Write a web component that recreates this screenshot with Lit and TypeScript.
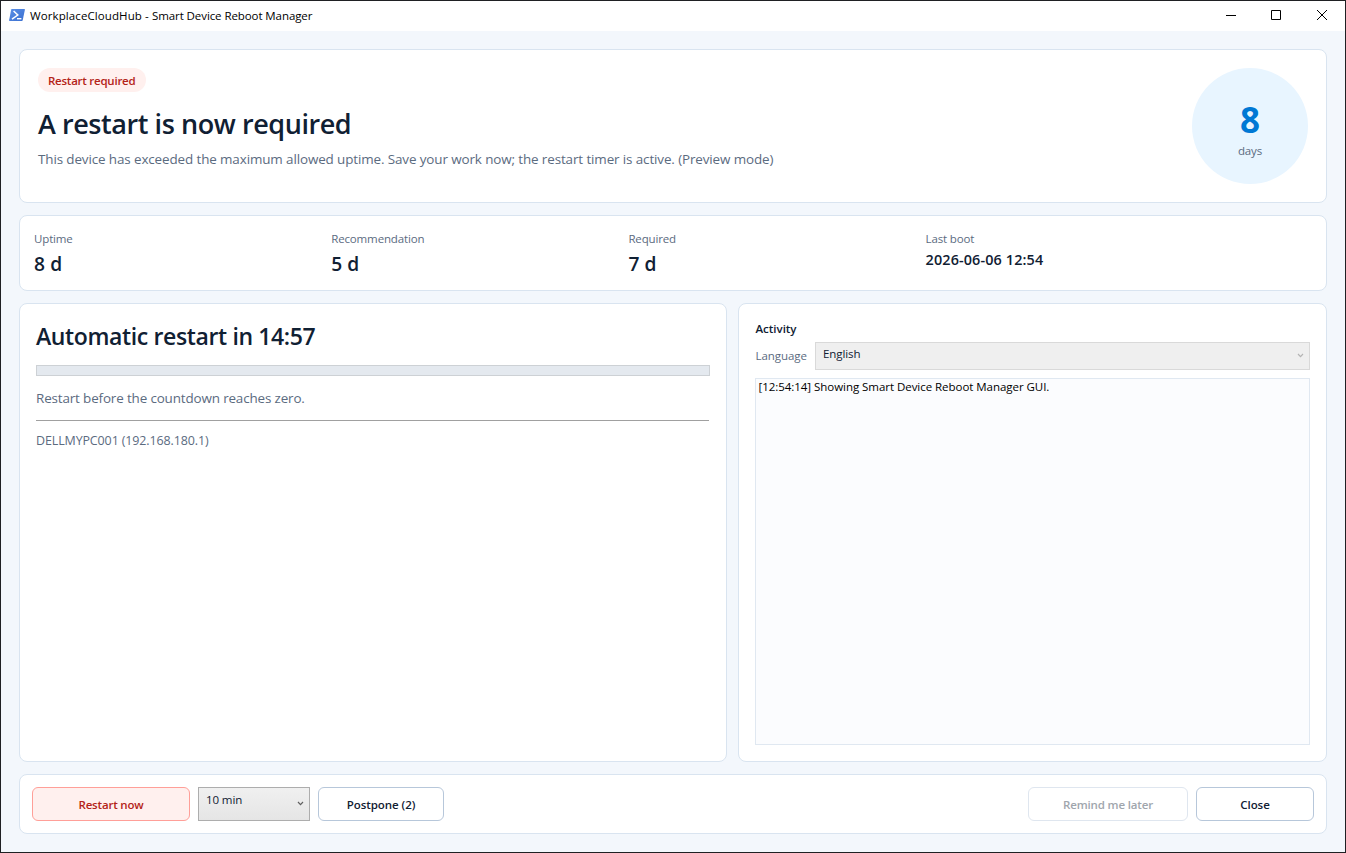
import { LitElement, html, css } from "lit";
import { customElement } from "lit/decorators.js";

interface Stat {
  label: string;
  value: string;
  small?: boolean;
}

const STATS: Stat[] = [
  { label: "Uptime", value: "8 d" },
  { label: "Recommendation", value: "5 d" },
  { label: "Required", value: "7 d" },
  { label: "Last boot", value: "2026-06-06 12:54", small: true },
];

@customElement("app-root")
export class AppRoot extends LitElement {
  static styles = css`
    * {
      box-sizing: border-box;
    }
    :host {
      display: block;
      font-family: "Segoe UI", "Open Sans", "Noto Sans", sans-serif;
      font-size: 11.52px;
      line-height: 16px;
      color: #102033;
    }
    .window {
      display: flex;
      flex-direction: column;
      height: 853px;
      border: 1px solid #1f2023;
      background: #f3f7fc;
      overflow: hidden;
      white-space: nowrap;
    }
    .titlebar {
      display: flex;
      align-items: center;
      height: 30px;
      flex: none;
      background: #fff;
      padding-left: 8px;
      color: #000;
    }
    .app-icon {
      display: block;
      width: 16px;
      height: 12px;
      margin-right: 5px;
      margin-top: -2px;
    }
    .title {
      flex: 1;
      letter-spacing: -0.09px;
    }
    .product {
      letter-spacing: 0.09px;
    }
    .window-controls {
      display: block;
      width: 138px;
      height: 30px;
    }
    .content {
      flex: 1;
      display: flex;
      flex-direction: column;
      gap: 12px;
      padding: 18px;
    }
    .card {
      background: #fff;
      border: 1px solid #d9e4f0;
      border-radius: 8px;
    }
    .header {
      display: flex;
      justify-content: space-between;
      height: 154px;
      padding: 18px;
    }
    .badge {
      width: 108px;
      height: 24px;
      border-radius: 12px;
      background: #fff0ee;
      color: #b42318;
      font-weight: 600;
      line-height: 24px;
      padding: 1px 0 0 10px;
      letter-spacing: -0.25px;
    }
    h1,
    h2,
    p {
      margin: 0;
    }
    h1 {
      margin-top: 13px;
      font-size: 27px;
      line-height: 38px;
      font-weight: 600;
      letter-spacing: -0.43px;
    }
    .description {
      margin-top: 6px;
      font-size: 13.44px;
      line-height: 20px;
      letter-spacing: -0.12px;
      color: #5b6b7f;
    }
    .circle {
      width: 116px;
      height: 116px;
      border-radius: 50%;
      background: #e8f5ff;
      display: flex;
      flex-direction: column;
      align-items: center;
      justify-content: center;
      padding-top: 6px;
    }
    .count {
      font-size: 35px;
      line-height: 40px;
      font-weight: 700;
      color: #0078d4;
    }
    .unit {
      margin-top: 3px;
      letter-spacing: -0.17px;
      color: #5b6b7f;
    }
    .stats {
      display: grid;
      grid-template-columns: repeat(4, 297.2px);
      height: 76px;
      padding: 15px 14px 0;
    }
    .label {
      letter-spacing: -0.15px;
      color: #5b6b7f;
    }
    .value {
      margin-top: 4px;
      font-size: 19.2px;
      line-height: 26px;
      font-weight: 600;
      letter-spacing: 0.1px;
    }
    .value.small {
      margin-top: 3px;
      font-size: 14.4px;
      line-height: 20px;
      letter-spacing: 0.13px;
    }
    .main {
      display: grid;
      grid-template-columns: 708px 589px;
      gap: 11px;
      height: 459px;
    }
    .panel {
      padding: 16px;
      display: flex;
      flex-direction: column;
    }
    h2 {
      font-size: 23.04px;
      line-height: 32px;
      font-weight: 600;
      letter-spacing: -0.38px;
    }
    .progress {
      margin-top: 13px;
      height: 11px;
      border: 1px solid #cdd1d5;
      background: #e4e9ef;
    }
    .hint {
      margin-top: 12px;
      font-size: 13.44px;
      line-height: 20px;
      letter-spacing: -0.15px;
      color: #5b6b7f;
    }
    .separator {
      margin: 12px 1px 0 0;
      height: 1px;
      background: #a0a0a0;
    }
    .host {
      margin-top: 11px;
      font-size: 12.48px;
      line-height: 18px;
      letter-spacing: -0.116px;
      color: #5b6b7f;
    }
    .activity {
      padding: 1px 0 0 0.5px;
      height: 16px;
      font-weight: 600;
      letter-spacing: -0.02px;
    }
    .language {
      display: flex;
      align-items: center;
      justify-content: space-between;
      height: 28px;
      margin-top: 6px;
      padding-left: 0.5px;
      color: #5b6b7f;
      letter-spacing: -0.08px;
    }
    .combo {
      display: flex;
      justify-content: space-between;
      border: 1px solid #adadad;
      color: #102033;
      letter-spacing: -0.1px;
    }
    .combo.disabled {
      width: 495px;
      height: 28px;
      padding: 3px 5px 0 7px;
      background: #efefef;
      border-color: #d9d9d9;
    }
    .combo.delay {
      width: 112px;
      height: 34px;
      margin: 0 8px;
      padding: 4px 5px 0 7px;
      background: linear-gradient(#f0f0f0, #e5e5e5);
    }
    .chevron {
      display: block;
      width: 7px;
      height: 5px;
      fill: none;
      stroke: #606060;
      stroke-width: 1.2;
    }
    .disabled .chevron {
      margin-top: 7px;
      stroke: #b4b4b4;
    }
    .delay .chevron {
      margin-top: 9px;
    }
    .log {
      flex: 1;
      margin-top: 8px;
      border: 1px solid #e0e8f1;
      background: #fbfcfe;
      color: #000;
      padding-left: 2.5px;
      letter-spacing: -0.05px;
    }
    .footer {
      display: flex;
      height: 60px;
      padding: 12px;
    }
    .button {
      height: 34px;
      border: 1px solid #b7c7da;
      border-radius: 6px;
      background: #fff;
      color: #102033;
      font: inherit;
      font-weight: 600;
      letter-spacing: -0.06px;
      padding: 1px 0 0;
      text-align: center;
    }
    .danger {
      width: 158px;
      border-color: #ff9f98;
      background: #fff0ee;
      color: #b42318;
      letter-spacing: -0.19px;
    }
    .postpone {
      width: 126px;
    }
    .remind {
      width: 160px;
      margin-left: auto;
      margin-right: 8px;
      border-color: #dfe6ef;
      color: #9fa6ad;
      letter-spacing: -0.155px;
    }
    .close {
      width: 118px;
    }
  `;

  private chevron() {
    return html`<svg class="chevron" viewBox="0 0 7 5"><path d="M1 1L3.5 3.6L6 1" /></svg>`;
  }

  render() {
    return html`
      <div class="window">
        <div class="titlebar">
          <svg class="app-icon" viewBox="0 0 16 12">
            <defs>
              <linearGradient id="blue" x1="0" y1="0" x2="1" y2="1">
                <stop offset="0" stop-color="#5a8fe6" />
                <stop offset="1" stop-color="#3a6fd0" />
              </linearGradient>
            </defs>
            <path d="M2.9 0H15.4Q16 0 15.9 .7L13.7 11.3Q13.5 12 12.9 12H.6Q0 12 .1 11.3L2.2 .6Q2.4 0 2.9 0Z" fill="url(#blue)" />
            <path d="M4.6 2L8.8 6L3 10.2" fill="none" stroke="#fff" stroke-width="1.5" />
            <path d="M8 9.7H12.4" stroke="#fff" stroke-width="1.4" />
          </svg>
          <div class="title"><span class="product">WorkplaceCloudHub - </span>Smart Device Reboot Manager</div>
          <svg class="window-controls" viewBox="0 0 138 30" fill="none" stroke="#000">
            <path d="M19 14.5H29" />
            <path d="M64.5 9.5H73.5V18.5H64.5Z" />
            <path d="M110 9L120 19M120 9L110 19" />
          </svg>
        </div>
        <div class="content">
          <section class="card header">
            <div>
              <div class="badge">Restart required</div>
              <h1>A restart is now required</h1>
              <p class="description">This device has exceeded the maximum allowed uptime. Save your work now; the restart timer is active. (Preview mode)</p>
            </div>
            <div class="circle">
              <div class="count">8</div>
              <div class="unit">days</div>
            </div>
          </section>
          <section class="card stats">
            ${STATS.map(
              (s) => html`<div>
                <div class="label">${s.label}</div>
                <div class="value ${s.small ? "small" : ""}">${s.value}</div>
              </div>`
            )}
          </section>
          <div class="main">
            <section class="card panel">
              <h2>Automatic restart in 14:57</h2>
              <div class="progress"></div>
              <p class="hint">Restart before the countdown reaches zero.</p>
              <div class="separator"></div>
              <p class="host">DELLMYPC001 (192.168.180.1)</p>
            </section>
            <section class="card panel">
              <div class="activity">Activity</div>
              <div class="language">
                <span>Language</span>
                <div class="combo disabled"><span>English</span>${this.chevron()}</div>
              </div>
              <div class="log">[12:54:14] Showing Smart Device Reboot Manager GUI.</div>
            </section>
          </div>
          <section class="card footer">
            <button class="button danger">Restart now</button>
            <div class="combo delay"><span>10 min</span>${this.chevron()}</div>
            <button class="button postpone">Postpone (2)</button>
            <button class="button remind" disabled>Remind me later</button>
            <button class="button close">Close</button>
          </section>
        </div>
      </div>
    `;
  }
}
